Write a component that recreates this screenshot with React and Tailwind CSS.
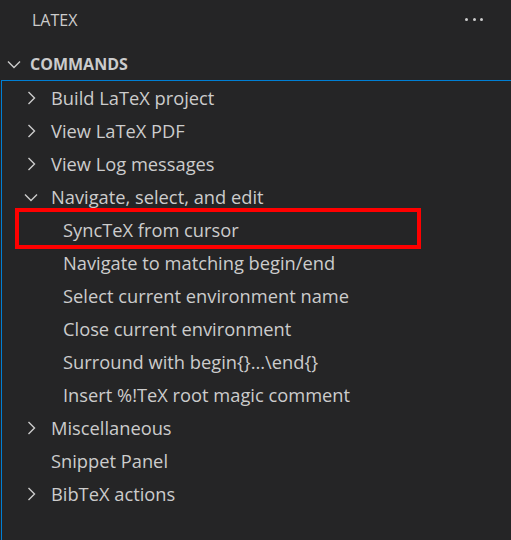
import React from 'react';

const font = { fontFamily: '"Segoe UI", "Open Sans", "Noto Sans", sans-serif' };

function ChevronRight() {
  return (
    <svg width="16" height="16" viewBox="0 0 16 16" className="shrink-0">
      <polyline points="5.5,2 11.5,8 5.5,14" fill="none" stroke="#cccccc" strokeWidth="1.4" />
    </svg>
  );
}

function ChevronDown() {
  return (
    <svg width="16" height="16" viewBox="0 0 16 16" className="shrink-0">
      <polyline points="2,5.5 8,11.5 14,5.5" fill="none" stroke="#cccccc" strokeWidth="1.4" />
    </svg>
  );
}

const items = [
  { label: 'Build LaTeX project', level: 1, twistie: 'right' },
  { label: 'View LaTeX PDF', level: 1, twistie: 'right' },
  { label: 'View Log messages', level: 1, twistie: 'right' },
  { label: 'Navigate, select, and edit', level: 1, twistie: 'down' },
  { label: 'SyncTeX from cursor', level: 2, boxed: true },
  { label: 'Navigate to matching begin/end', level: 2 },
  { label: 'Select current environment name', level: 2 },
  { label: 'Close current environment', level: 2 },
  { label: 'Surround with begin{}...\\end{}', level: 2 },
  { label: 'Insert %!TeX root magic comment', level: 2 },
  { label: 'Miscellaneous', level: 1, twistie: 'right' },
  { label: 'Snippet Panel', level: 1 },
  { label: 'BibTeX actions', level: 1, twistie: 'right' },
];

export default function App() {
  return (
    <div className="w-[511px] h-[540px] bg-[#252526] text-[#cccccc] overflow-hidden" style={font}>
      <div className="h-[47px] flex items-start justify-between pl-[32px] pr-[28px] pt-[8px]">
        <span className="text-[16px] leading-[24px]">LATEX</span>
        <div className="flex items-center gap-[4.5px] mt-[10px]">
          <span className="w-[3px] h-[3px] rounded-full bg-[#cccccc]" />
          <span className="w-[3px] h-[3px] rounded-full bg-[#cccccc]" />
          <span className="w-[3px] h-[3px] rounded-full bg-[#cccccc]" />
        </div>
      </div>
      <div className="h-[33px] flex items-center pl-[6px] gap-[8px]">
        <ChevronDown />
        <span className="text-[16px] font-bold">COMMANDS</span>
      </div>
      <div className="border-t border-l border-[#007fd4] h-full ml-[1px]">
        {items.map((it) => (
          <div key={it.label} className="h-[33px] flex items-center relative">
            {it.level === 1 ? (
              <div className="flex items-center pl-[21px]">
                <div className="w-[16px]">
                  {it.twistie === 'right' && <ChevronRight />}
                  {it.twistie === 'down' && <ChevronDown />}
                </div>
                <span className="ml-[12px] text-[18.3px] whitespace-nowrap">{it.label}</span>
              </div>
            ) : (
              <span className="pl-[61px] text-[18.3px] whitespace-nowrap">{it.label}</span>
            )}
            {it.boxed && (
              <div className="absolute left-[13px] top-[-5px] w-[406px] h-[41px] border-4 border-[#ff0000]" />
            )}
          </div>
        ))}
      </div>
    </div>
  );
}
